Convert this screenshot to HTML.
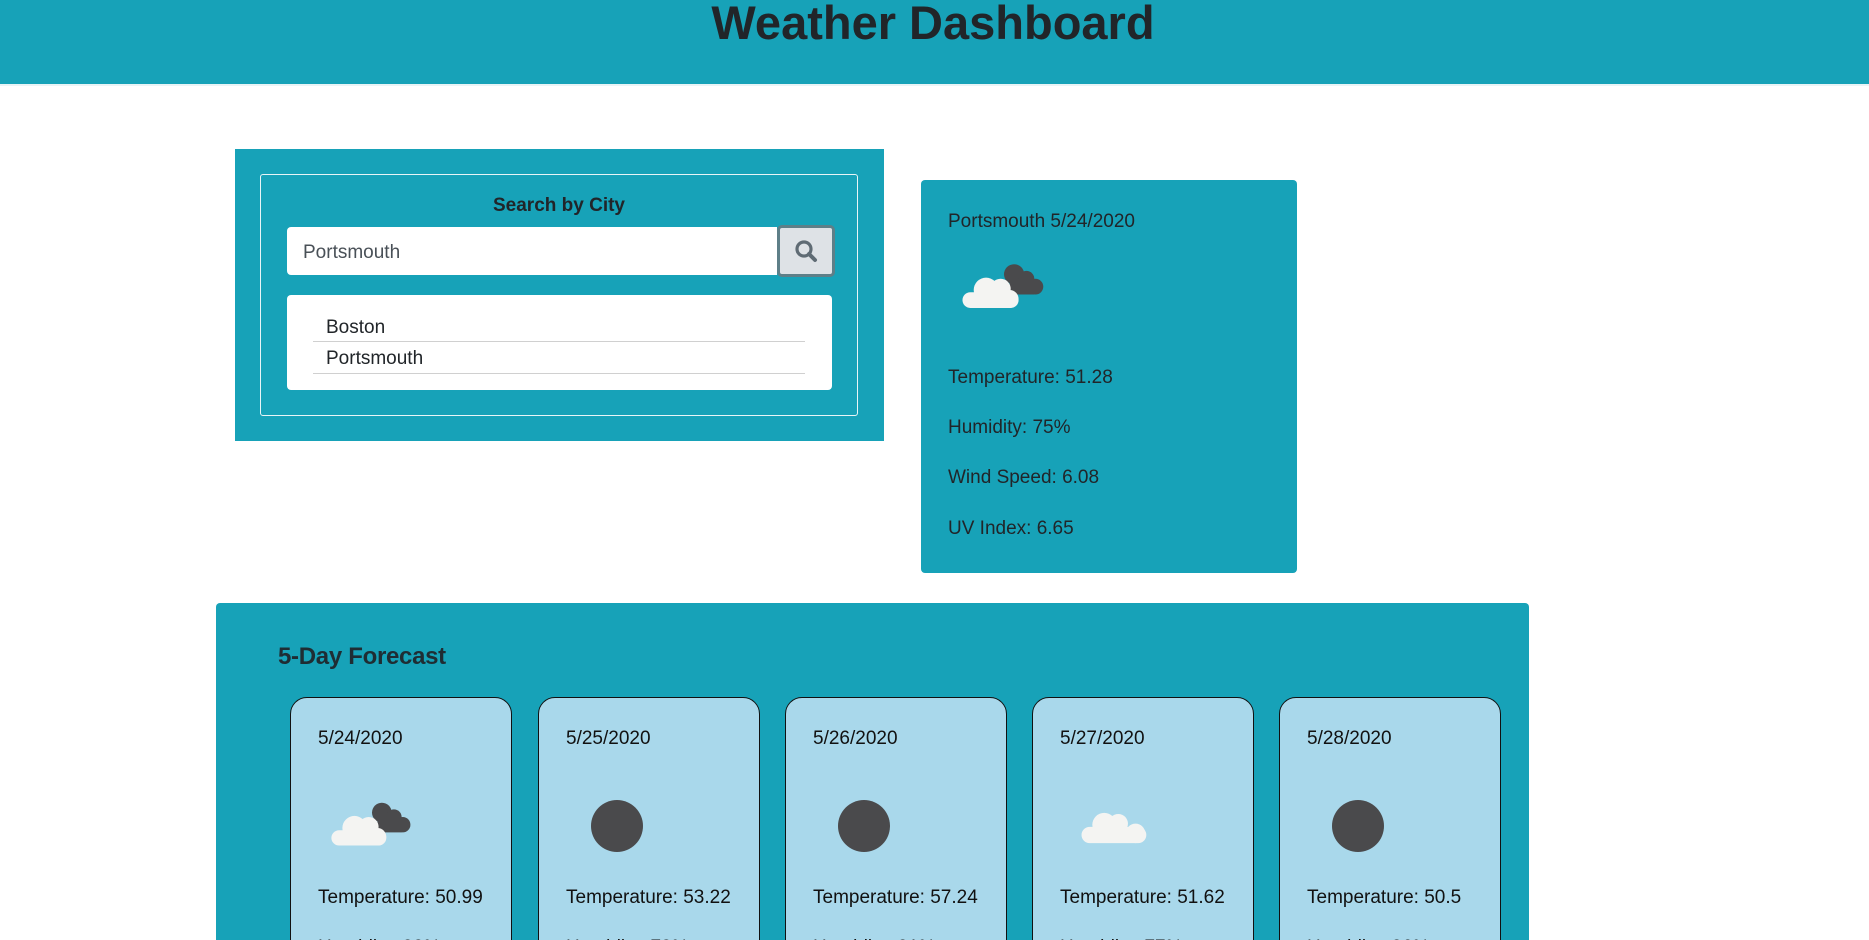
<!DOCTYPE html>
<html><head><meta charset="utf-8"><style>
*{box-sizing:border-box;margin:0;padding:0}
html,body{width:1869px;height:940px;overflow:hidden}
body{background:#fff;font-family:"Liberation Sans",sans-serif;color:#212529}
#w{position:relative;width:1869px;height:940px;overflow:hidden}
.hdr{position:absolute;left:0;top:0;width:1869px;height:86px;background:#17a2b8;border-bottom:2px solid #e9f4f6}
.hdr h1{position:absolute;left:0;width:1866px;text-align:center;top:-5px;font-size:47px;font-weight:bold;color:#212529}
.abs{position:absolute}
.t{position:absolute;font-size:19px;white-space:nowrap;line-height:1}
.card{position:absolute;top:697px;width:222px;height:300px;background:#a9d8eb;border:1px solid #111;border-radius:17px}
.card .t{left:27px;color:#111}
</style></head><body><div id="w">
<div class="hdr"><h1>Weather Dashboard</h1></div>

<div class="abs" style="left:235px;top:149px;width:649px;height:292px;background:#17a2b8"></div>
<div class="abs" style="left:260px;top:174px;width:598px;height:242px;border:1px solid #e8f5f7;border-radius:3px"></div>
<div class="t" style="left:260px;width:598px;text-align:center;top:196px;font-weight:bold;font-size:19px">Search by City</div>
<div class="abs" style="left:287px;top:227px;width:490px;height:48px;background:#fff;border-radius:4px 0 0 4px"></div>
<div class="t" style="left:303px;top:243px;color:#495057">Portsmouth</div>
<div class="abs" style="left:777px;top:225px;width:58px;height:52px;background:#dee2e6;border:3px solid #5e7f88;border-radius:5px"></div>
<svg class="abs" style="left:793px;top:238px" width="26" height="26" viewBox="0 0 26 26"><circle cx="11" cy="11" r="7" fill="none" stroke="#5f6b74" stroke-width="3.2"/><line x1="16" y1="16" x2="22" y2="22" stroke="#5f6b74" stroke-width="4" stroke-linecap="round"/></svg>
<div class="abs" style="left:287px;top:295px;width:545px;height:95px;background:#fff;border-radius:4px"></div>
<div class="t" style="left:326px;top:318px">Boston</div>
<div class="abs" style="left:313px;top:341px;width:492px;height:1px;background:#d0d0d0"></div>
<div class="t" style="left:326px;top:349px">Portsmouth</div>
<div class="abs" style="left:313px;top:373px;width:492px;height:1px;background:#d0d0d0"></div>

<div class="abs" style="left:921px;top:180px;width:376px;height:393px;background:#17a2b8;border-radius:4px"></div>
<div class="t" style="left:948px;top:212px">Portsmouth 5/24/2020</div>
<svg class="abs" style="left:958px;top:256px" width="92" height="68" viewBox="0 0 82 60"><g fill="#4a4a4c"><circle cx="50" cy="16" r="9"/><circle cx="61" cy="20" r="7"/><circle cx="69" cy="27" r="7"/><rect x="46" y="20" width="22" height="14"/></g><g fill="#f4f4f2"><circle cx="25" cy="30" r="11"/><circle cx="38" cy="29" r="9"/><rect x="4" y="32" width="50" height="14" rx="7"/><circle cx="46" cy="38" r="8"/></g></svg>
<div class="t" style="left:948px;top:368px">Temperature: 51.28</div>
<div class="t" style="left:948px;top:418px">Humidity: 75%</div>
<div class="t" style="left:948px;top:468px">Wind Speed: 6.08</div>
<div class="t" style="left:948px;top:519px">UV Index: 6.65</div>

<div class="abs" style="left:216px;top:603px;width:1313px;height:360px;background:#17a2b8;border-radius:4px"></div>
<div class="t" style="left:278px;top:645px;font-size:24px;font-weight:bold;color:#1f2d33;letter-spacing:-0.3px">5-Day Forecast</div>

<div class="card" style="left:290px"><div class="t" style="top:31px">5/24/2020</div>
<svg class="abs" style="left:36px;top:97px" width="90" height="66" viewBox="0 0 82 60"><g fill="#4a4a4c"><circle cx="50" cy="16" r="9"/><circle cx="61" cy="20" r="7"/><circle cx="69" cy="27" r="7"/><rect x="46" y="20" width="22" height="14"/></g><g fill="#f4f4f2"><circle cx="25" cy="30" r="11"/><circle cx="38" cy="29" r="9"/><rect x="4" y="32" width="50" height="14" rx="7"/><circle cx="46" cy="38" r="8"/></g></svg>
<div class="t" style="top:190px">Temperature: 50.99</div><div class="t" style="top:240px">Humidity: 90%</div></div>

<div class="card" style="left:538px"><div class="t" style="top:31px">5/25/2020</div>
<div class="abs" style="left:52px;top:102px;width:52px;height:52px;border-radius:50%;background:#4a4a4c"></div>
<div class="t" style="top:190px">Temperature: 53.22</div><div class="t" style="top:240px">Humidity: 78%</div></div>

<div class="card" style="left:785px"><div class="t" style="top:31px">5/26/2020</div>
<div class="abs" style="left:52px;top:102px;width:52px;height:52px;border-radius:50%;background:#4a4a4c"></div>
<div class="t" style="top:190px">Temperature: 57.24</div><div class="t" style="top:240px">Humidity: 91%</div></div>

<div class="card" style="left:1032px"><div class="t" style="top:31px">5/27/2020</div>
<svg class="abs" style="left:44px;top:103px" width="76" height="54" viewBox="0 0 70 50"><g fill="#f4f4f2"><circle cx="25" cy="22" r="11"/><circle cx="38" cy="21" r="9"/><rect x="4" y="24" width="60" height="15" rx="7.5"/><circle cx="54" cy="30" r="9"/></g></svg>
<div class="t" style="top:190px">Temperature: 51.62</div><div class="t" style="top:240px">Humidity: 77%</div></div>

<div class="card" style="left:1279px"><div class="t" style="top:31px">5/28/2020</div>
<div class="abs" style="left:52px;top:102px;width:52px;height:52px;border-radius:50%;background:#4a4a4c"></div>
<div class="t" style="top:190px">Temperature: 50.5</div><div class="t" style="top:240px">Humidity: 96%</div></div>
</div></body></html>
